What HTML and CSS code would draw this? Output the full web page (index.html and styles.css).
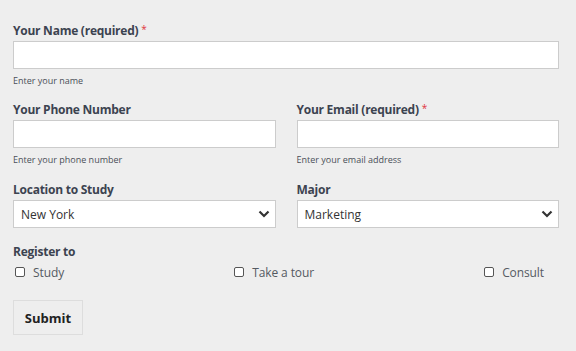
FILE: index.html
```html
<!DOCTYPE html>
<html>
<head>
<meta charset="utf-8">
<link rel="stylesheet" href="styles.css">
</head>
<body>
<form class="form">
  <div class="field">
    <label class="label">Your Name (required) <span class="req">*</span></label>
    <input class="input" type="text">
    <div class="help">Enter your name</div>
  </div>
  <div class="row">
    <div class="field">
      <label class="label">Your Phone Number</label>
      <input class="input" type="text">
      <div class="help">Enter your phone number</div>
    </div>
    <div class="field">
      <label class="label">Your Email (required) <span class="req">*</span></label>
      <input class="input" type="text">
      <div class="help">Enter your email address</div>
    </div>
  </div>
  <div class="row">
    <div class="field">
      <label class="label">Location to Study</label>
      <div class="select-wrap">
        <select class="select"><option>New York</option></select>
        <svg class="chev" width="12" height="8" viewBox="0 0 12 8"><path d="M1.5 1.5 L6 6 L10.5 1.5" fill="none" stroke="#333" stroke-width="2.2"/></svg>
      </div>
    </div>
    <div class="field">
      <label class="label">Major</label>
      <div class="select-wrap">
        <select class="select"><option>Marketing</option></select>
        <svg class="chev" width="12" height="8" viewBox="0 0 12 8"><path d="M1.5 1.5 L6 6 L10.5 1.5" fill="none" stroke="#333" stroke-width="2.2"/></svg>
      </div>
    </div>
  </div>
  <div class="group">
    <div class="label">Register to</div>
    <div class="checks">
      <label class="check"><input type="checkbox" class="box"><span>Study</span></label>
      <label class="check"><input type="checkbox" class="box"><span>Take a tour</span></label>
      <label class="check"><input type="checkbox" class="box"><span>Consult</span></label>
    </div>
  </div>
  <button type="button" class="submit">Submit</button>
</form>
</body>
</html>
```
FILE: styles.css
```css
html, body {
  margin: 0;
  padding: 0;
  background: #eeeeee;
}
body {
  font-family: "Open Sans", "Noto Sans", sans-serif;
  color: #3c4350;
}
.form {
  padding: 22px 17px 0 13px;
  display: flex;
  flex-direction: column;
}
.field {
  display: flex;
  flex-direction: column;
  min-width: 0;
}
.row {
  display: grid;
  grid-template-columns: 1fr 1fr;
  column-gap: 21px;
}
.row + .row {
  margin-top: 1px;
}
.label {
  display: block;
  font-size: 12px;
  font-weight: 700;
  letter-spacing: -0.25px;
  line-height: 18px;
  height: 18px;
  color: #3c4350;
  margin-bottom: 1px;
}
.req {
  color: #e0343d;
  font-weight: 400;
  font-size: 10px;
  vertical-align: top;
  line-height: 14px;
}
.input {
  box-sizing: border-box;
  height: 28px;
  width: 100%;
  margin: 0;
  border: 1px solid #cccccc;
  background: #fff;
  outline: none;
}
.help {
  font-size: 9px;
  line-height: 14px;
  margin-top: 5px;
  margin-bottom: 13px;
  color: #4a4f58;
}
.select-wrap {
  position: relative;
  margin-bottom: 15px;
}
.select {
  appearance: none;
  -webkit-appearance: none;
  box-sizing: border-box;
  width: 100%;
  height: 28px;
  margin: 0;
  border: 1px solid #cccccc;
  background: #fff;
  padding: 0 0 0 7px;
  font-family: "Open Sans", "Noto Sans", sans-serif;
  font-size: 12px;
  color: #333;
  outline: none;
}
.chev {
  position: absolute;
  right: 6px;
  top: 10px;
}
.group {
  display: flex;
  flex-direction: column;
}
.checks {
  display: flex;
  justify-content: space-between;
  padding: 1px 15px 0 2px;
  height: 18px;
  align-items: center;
}
.check {
  display: flex;
  align-items: center;
  font-size: 12px;
  letter-spacing: -0.1px;
  color: #555a62;
}
.box {
  appearance: none;
  -webkit-appearance: none;
  width: 10px;
  height: 10px;
  margin: 0 8px 0 0;
  border: 1px solid #555;
  border-radius: 2px;
  background: #fff;
}
.submit {
  align-self: flex-start;
  margin-top: 19px;
  box-sizing: border-box;
  width: 70px;
  height: 35px;
  border: 1px solid #dddddd;
  background: #eeeeee;
  font-family: "Open Sans", "Noto Sans", sans-serif;
  font-weight: 700;
  font-size: 13px;
  color: #222;
  padding: 0;
}
```
